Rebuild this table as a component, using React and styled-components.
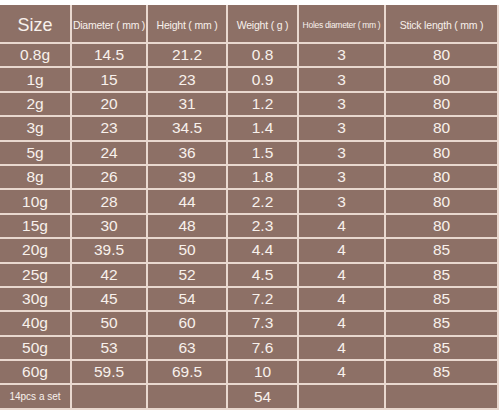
import React from 'react';
import styled, { createGlobalStyle } from 'styled-components';

const GlobalStyle = createGlobalStyle`
  html, body {
    margin: 0;
    padding: 0;
    background: #ffffff;
  }
  body {
    font-family: "Liberation Sans", Arial, sans-serif;
  }
`;

const rows = [
  ['0.8g', '14.5', '21.2', '0.8', '3', '80'],
  ['1g', '15', '23', '0.9', '3', '80'],
  ['2g', '20', '31', '1.2', '3', '80'],
  ['3g', '23', '34.5', '1.4', '3', '80'],
  ['5g', '24', '36', '1.5', '3', '80'],
  ['8g', '26', '39', '1.8', '3', '80'],
  ['10g', '28', '44', '2.2', '3', '80'],
  ['15g', '30', '48', '2.3', '4', '80'],
  ['20g', '39.5', '50', '4.4', '4', '85'],
  ['25g', '42', '52', '4.5', '4', '85'],
  ['30g', '45', '54', '7.2', '4', '85'],
  ['40g', '50', '60', '7.3', '4', '85'],
  ['50g', '53', '63', '7.6', '4', '85'],
  ['60g', '59.5', '69.5', '10', '4', '85'],
];

const widths = [71, 76, 80, 71, 87, 113];

const Page = styled.div`
  width: 500px;
  height: 413px;
  padding-top: 5px;
  box-sizing: border-box;
  overflow: hidden;
`;

const Table = styled.table`
  width: 498px;
  border-collapse: collapse;
  table-layout: fixed;
  background: #8d7066;
  color: #f8f1ec;
`;

const Cell = styled.td`
  border: 2px solid #e9d8cf;
  padding: 0;
  text-align: center;
  vertical-align: middle;
  font-size: ${(p) => p.$size || 15.5}px;
  letter-spacing: ${(p) => p.$spacing || 0}px;
  white-space: nowrap;
  &:first-child {
    border-left: none;
  }
`;

const HeadRow = styled.tr`
  height: 38px;
  & > td {
    border-top: none;
    padding-top: 3px;
  }
`;

const Row = styled.tr`
  height: 24.4px;
`;

export default function App() {
  return (
    <Page>
      <GlobalStyle />
      <Table>
        <colgroup>
          {widths.map((w, i) => (
            <col key={i} style={{ width: w }} />
          ))}
        </colgroup>
        <tbody>
          <HeadRow>
            <Cell $size={18}>Size</Cell>
            <Cell $size={10.5} $spacing={-0.25}>Diameter ( mm )</Cell>
            <Cell $size={10.5} $spacing={-0.2}>Height ( mm )</Cell>
            <Cell $size={10.5} $spacing={-0.2}>Weight ( g )</Cell>
            <Cell $size={8.5} $spacing={-0.3}>Holes diameter ( mm )</Cell>
            <Cell $size={10.5} $spacing={-0.2}>Stick length ( mm )</Cell>
          </HeadRow>
          {rows.map((r) => (
            <Row key={r[0]}>
              {r.map((v, i) => (
                <Cell key={i}>{v}</Cell>
              ))}
            </Row>
          ))}
          <Row>
            <Cell $size={10}>14pcs a set</Cell>
            <Cell />
            <Cell />
            <Cell>54</Cell>
            <Cell />
            <Cell />
          </Row>
        </tbody>
      </Table>
    </Page>
  );
}
